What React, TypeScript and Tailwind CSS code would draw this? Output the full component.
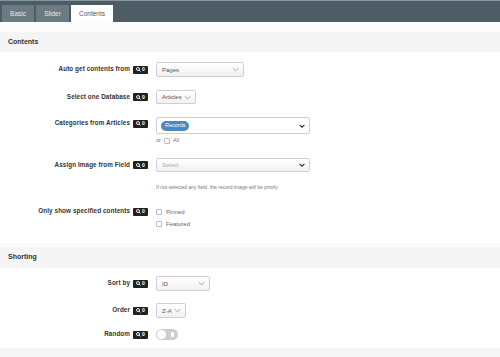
import React from "react";

const Badge = () => (
  <span className="inline-flex items-center justify-center gap-[1px] bg-[#222] text-white rounded-[1px] h-[8px] w-[15px] text-[5px] font-bold leading-none">
    <svg width="5" height="5" viewBox="0 0 10 10">
      <circle cx="4" cy="4" r="3" fill="none" stroke="white" strokeWidth="1.8" />
      <line x1="6" y1="6" x2="9" y2="9" stroke="white" strokeWidth="1.8" />
    </svg>
    <span>0</span>
  </span>
);

const Chevron = ({ dark }: { dark?: boolean }) => (
  <svg width={dark ? 6 : 7} height={dark ? 4 : 5} viewBox="0 0 10 6">
    <polyline points="1,1 5,5 9,1" fill="none" stroke={dark ? "#333" : "#999"} strokeWidth={dark ? 2 : 1.3} />
  </svg>
);

const Label = ({ text, h }: { text: string; h: string }) => (
  <div className={`w-[148px] shrink-0 flex items-center justify-end gap-[3px] ${h}`}>
    <span className="text-[6.3px] font-bold text-[#333] leading-none tracking-[0.1px]">{text}</span>
    <Badge />
  </div>
);

const Select = ({ w, h, text, dark, muted }: { w: string; h: string; text: string; dark?: boolean; muted?: boolean }) => (
  <div className={`${w} ${h} border border-[#cfcfcf] rounded-[2px] bg-gradient-to-b from-white to-[#f1f1f1] flex items-center justify-between pl-[5px] pr-[4px]`}>
    <span className={`text-[6px] leading-none ${muted ? "text-[#aaa]" : "text-[#555]"}`}>{text}</span>
    <Chevron dark={dark} />
  </div>
);

const Check = ({ text }: { text: string }) => (
  <div className="flex items-center gap-[4px] h-[9px]">
    <span className="w-[6px] h-[6px] border border-[#bbb] bg-white rounded-[1px]" />
    <span className="text-[6px] text-[#666] leading-none">{text}</span>
  </div>
);

export default function App() {
  return (
    <div className="w-[500px] h-[357px] bg-[#f6f6f6] overflow-hidden" style={{ fontFamily: '"Liberation Sans", Arial, sans-serif' }}>
      <div className="h-[22px] bg-[#4c5b64] border-t border-[#8796a0] flex items-end pl-[2px] gap-[1px]">
        <div className="w-[32px] h-[17px] bg-[#6c7a82] flex items-center justify-center text-[6.5px] text-[#e4e8ea]">Basic</div>
        <div className="w-[33px] h-[17px] bg-[#6c7a82] flex items-center justify-center text-[6.5px] text-[#e4e8ea] ml-[1px]">Slider</div>
        <div className="w-[42px] h-[17px] bg-white flex items-center justify-center text-[6.5px] text-[#555] ml-[1px]">Contents</div>
      </div>
      <div className="h-[10px] bg-[#fcfcfc]" />
      <div className="h-[20px] bg-[#f5f5f5] flex items-center pl-[8px] text-[7px] font-bold text-[#333]">Contents</div>
      <div className="bg-white h-[191px] pt-[10px]">
        <div className="flex items-center">
          <Label text="Auto get contents from" h="h-[15px]" />
          <div className="ml-[8px]">
            <Select w="w-[88px]" h="h-[15px]" text="Pages" />
          </div>
        </div>
        <div className="flex items-center mt-[13px]">
          <Label text="Select one Database" h="h-[14px]" />
          <div className="ml-[8px]">
            <Select w="w-[40px]" h="h-[14px]" text="Articles" />
          </div>
        </div>
        <div className="flex items-start mt-[13px]">
          <Label text="Categories from Articles" h="h-[13px]" />
          <div className="ml-[8px]">
            <div className="w-[154px] h-[17px] border border-[#cfcfcf] rounded-[2px] bg-white flex items-center justify-between pl-[4px] pr-[4px]">
              <span className="bg-[#4a88bf] text-white text-[5.5px] rounded-full px-[4px] h-[10px] flex items-center leading-none">Records</span>
              <Chevron dark />
            </div>
            <div className="flex items-center gap-[3px] mt-[3px] h-[8px]">
              <span className="text-[5.5px] text-[#777] leading-none">or</span>
              <span className="w-[6px] h-[6px] border border-[#bbb] bg-white rounded-[1px]" />
              <span className="text-[5.5px] text-[#777] leading-none">All</span>
            </div>
          </div>
        </div>
        <div className="flex items-center mt-[13px]">
          <Label text="Assign Image from Field" h="h-[14px]" />
          <div className="ml-[8px]">
            <Select w="w-[154px]" h="h-[14px]" text="Select" dark muted />
          </div>
        </div>
        <div className="ml-[156px] mt-[13px] text-[5px] text-[#777] leading-none">If not selected any field, the record image will be priorly</div>
        <div className="flex items-start mt-[17px]">
          <Label text="Only show specified contents" h="h-[9px]" />
          <div className="ml-[8px] flex flex-col gap-[3px]">
            <Check text="Pinned" />
            <Check text="Featured" />
          </div>
        </div>
      </div>
      <div className="h-[4px] bg-[#fcfcfc]" />
      <div className="h-[21px] bg-[#f5f5f5] flex items-center pl-[8px] text-[7px] font-bold text-[#333]">Shorting</div>
      <div className="bg-white h-[80px] pt-[8px]">
        <div className="flex items-center">
          <Label text="Sort by" h="h-[15px]" />
          <div className="ml-[8px]">
            <Select w="w-[54px]" h="h-[15px]" text="ID" />
          </div>
        </div>
        <div className="flex items-center mt-[12px]">
          <Label text="Order" h="h-[15px]" />
          <div className="ml-[8px]">
            <Select w="w-[30px]" h="h-[15px]" text="Z-A" />
          </div>
        </div>
        <div className="flex items-center mt-[11px]">
          <Label text="Random" h="h-[11px]" />
          <div className="ml-[8px]">
            <div className="w-[22px] h-[11px] rounded-full bg-[#cdcdcd] flex items-center justify-between px-[1px]">
              <span className="w-[9px] h-[9px] rounded-full bg-white" />
              <span className="w-[3px] h-[5px] bg-white rounded-[1px] mr-[3px]" />
            </div>
          </div>
        </div>
      </div>
    </div>
  );
}
